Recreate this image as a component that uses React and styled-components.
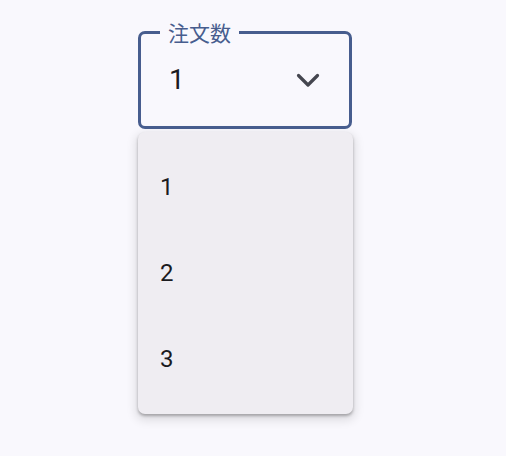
import React, { useState } from "react";
import styled, { createGlobalStyle } from "styled-components";

const GlobalStyle = createGlobalStyle`
  html, body {
    margin: 0;
    padding: 0;
    background: #f9f8fd;
  }
  body {
    font-family: Roboto, "Noto Sans CJK JP", sans-serif;
    width: 506px;
    height: 456px;
    overflow: hidden;
  }
`;

const Page = styled.div`
  padding: 31px 0 0 138px;
`;

const SelectArea = styled.div`
  display: flex;
  flex-direction: column;
  gap: 3px;
  width: 215px;
`;

const Field = styled.div`
  position: relative;
  box-sizing: border-box;
  width: 214px;
  height: 98px;
  border: 3px solid #475d8e;
  border-radius: 7px;
  display: flex;
  align-items: center;
  justify-content: space-between;
  padding: 0 29px 0 28px;
  cursor: pointer;
`;

/* label sits in the notch of the top border */
const Label = styled.span`
  position: absolute;
  top: -16px;
  left: 19px;
  padding: 0 8px;
  background: #f9f8fd;
  color: #475d8e;
  font-family: "Noto Sans CJK JP", sans-serif;
  font-size: 21px;
  line-height: 28px;
`;

const Value = styled.span`
  font-size: 28px;
  color: #1b1b1f;
  line-height: 1;
`;

const Menu = styled.ul`
  list-style: none;
  margin: 0;
  padding: 12px 0;
  background: #efedf2;
  border-radius: 7px;
  box-shadow: 0 2px 3px rgba(0, 0, 0, 0.28), 0 4px 10px 3px rgba(0, 0, 0, 0.1);
`;

const Item = styled.li`
  height: 86px;
  display: flex;
  align-items: center;
  padding: 0 22px;
  font-size: 24px;
  color: #1b1b1f;
  cursor: pointer;
`;

const Chevron = () => (
  <svg width="24" height="15" viewBox="0 0 24 15" fill="none">
    <path
      d="M2.5 2.5 L12 12 L21.5 2.5"
      stroke="#45464f"
      strokeWidth="3.2"
      strokeLinecap="round"
      strokeLinejoin="round"
    />
  </svg>
);

const options = [1, 2, 3];

export default function App() {
  const [value, setValue] = useState(1);

  return (
    <Page>
      <GlobalStyle />
      <SelectArea>
        <Field>
          <Label>注文数</Label>
          <Value>{value}</Value>
          <Chevron />
        </Field>
        <Menu>
          {options.map((o) => (
            <Item key={o} onClick={() => setValue(o)}>
              {o}
            </Item>
          ))}
        </Menu>
      </SelectArea>
    </Page>
  );
}
